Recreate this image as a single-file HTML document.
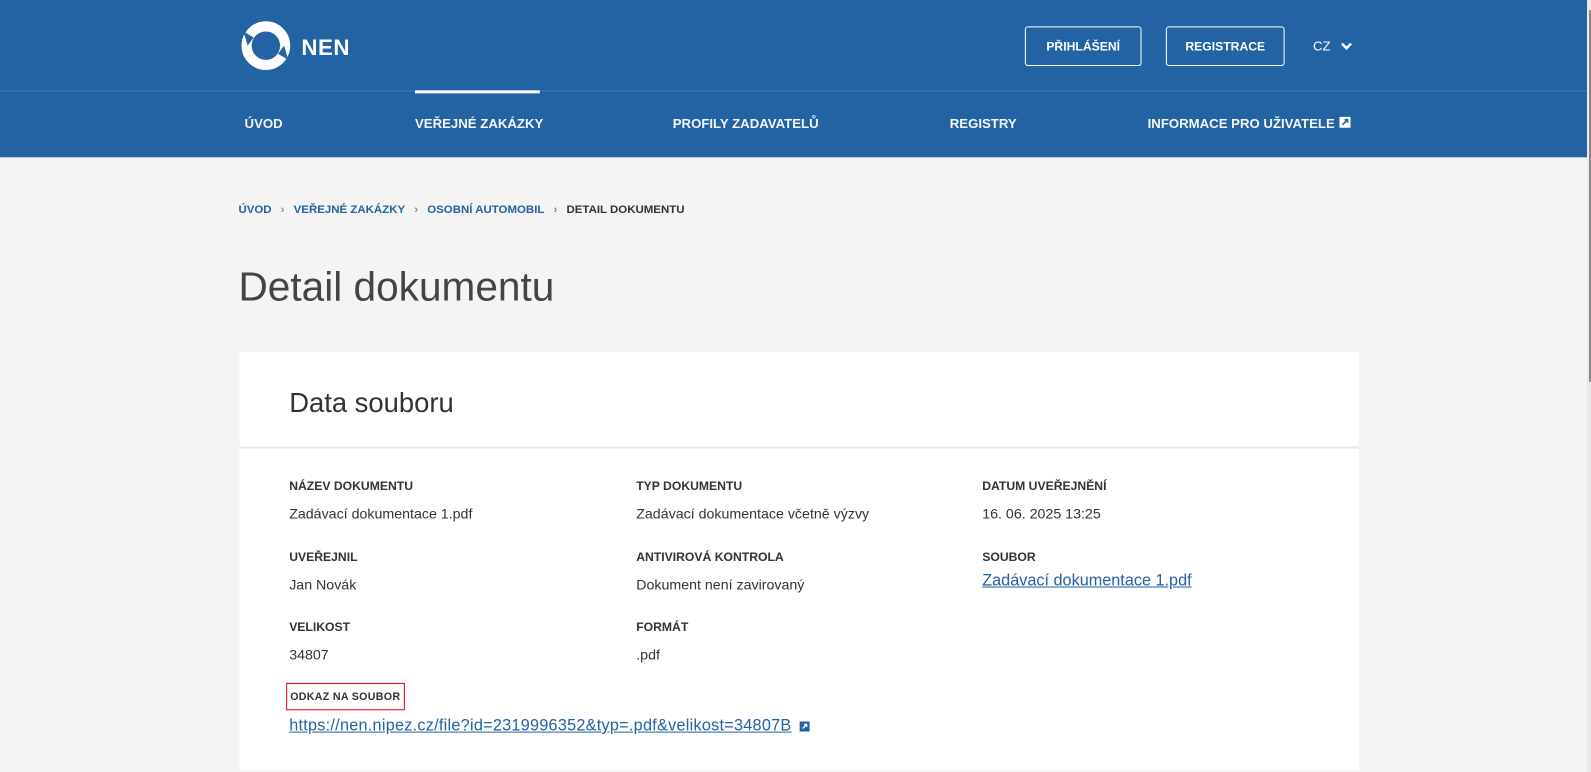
<!DOCTYPE html>
<html><head><meta charset="utf-8"><style>
*{margin:0;padding:0;box-sizing:border-box}
body{width:1591px;height:772px;overflow:hidden;background:#f4f4f4;font-family:"Liberation Sans",sans-serif;color:#333;position:relative}
#w{position:absolute;left:0;top:0;width:1568px;height:761px;transform:scale(1.0147);transform-origin:0 0}
.hdr{position:absolute;left:0;top:0;width:1566px;height:155px;background:#2362a3}
.line{position:absolute;left:0;top:89px;width:1566px;height:1px;background:#3d7bbd}
.nen{position:absolute;left:297px;top:34px;color:#fff;font-weight:bold;font-size:22px;letter-spacing:.5px}
.btn{position:absolute;top:26px;height:39px;border:1px solid #fff;border-radius:3px;color:#fff;font-weight:bold;font-size:12px;display:flex;align-items:center;justify-content:center}
.nav{position:absolute;top:114px;color:#fff;font-weight:bold;font-size:13px;opacity:.95}
.act{position:absolute;left:409px;top:89px;width:123px;height:3px;background:#fff}
.bc{position:absolute;top:201px;font-size:11.3px;font-weight:bold;left:235px;color:#2362a3;display:flex}
.bc .s{color:#888;margin:0 9px}
h1{position:absolute;left:235px;top:261px;font-size:40px;color:#444;font-family:"Liberation Sans",sans-serif;font-weight:normal}
.card{position:absolute;left:236px;top:347px;width:1103px;height:412px;background:#fff}
.card h2{position:absolute;left:49px;top:35px;font-weight:normal;font-size:27px;color:#333}
.sep{position:absolute;left:0;top:93px;width:1103px;height:2px;background:#e6e6e6}
.l{position:absolute;font-size:12px;font-weight:bold;color:#333}
.v{position:absolute;font-size:14px;color:#333}
a{color:#2362a3;text-decoration:underline}
.sb{position:absolute;left:1587px;top:0;width:4px;height:772px;background:#eaeaea}
.th{position:absolute;left:1589px;top:10px;width:2px;height:372px;background:#888}
</style></head><body>
<div id="w">
<div class="hdr"></div><div class="line"></div><div class="act"></div>
<svg style="position:absolute;left:236px;top:17px" width="52" height="56" viewBox="0 0 52 56"><circle cx="26" cy="28" r="19" fill="none" stroke="#fff" stroke-width="10"/><path d="M4 14 L14 20 L8 28Z" fill="#2362a3"/><path d="M48 42 L38 36 L44 28Z" fill="#2362a3"/></svg>
<div class="nen">NEN</div>
<div class="btn" style="left:1010px;width:115px">PŘIHLÁŠENÍ</div>
<div class="btn" style="left:1149px;width:117px">REGISTRACE</div>
<div style="position:absolute;left:1294px;top:38px;color:#fff;font-size:13px">CZ</div>
<svg style="position:absolute;left:1321px;top:41px" width="12" height="9" viewBox="0 0 12 9"><path d="M1.5 2 L6 6.5 L10.5 2" stroke="#fff" stroke-width="2.5" fill="none"/></svg>
<div class="nav" style="left:241px">ÚVOD</div>
<div class="nav" style="left:409px">VEŘEJNÉ ZAKÁZKY</div>
<div class="nav" style="left:663px">PROFILY ZADAVATELŮ</div>
<div class="nav" style="left:936px">REGISTRY</div>
<div class="nav" style="left:1131px">INFORMACE PRO UŽIVATELE</div>
<svg style="position:absolute;left:1320px;top:115px" width="11" height="11" viewBox="0 0 11 11"><rect width="11" height="11" fill="#fff"/><path d="M3 8 L8 3 M5 3 H8 V6" stroke="#2362a3" stroke-width="1.6" fill="none"/></svg>
<div class="bc"><span>ÚVOD</span><span class="s">›</span><span>VEŘEJNÉ ZAKÁZKY</span><span class="s">›</span><span>OSOBNÍ AUTOMOBIL</span><span class="s">›</span><span style="color:#333">DETAIL DOKUMENTU</span></div>
<h1>Detail dokumentu</h1>
<div class="card">
<h2>Data souboru</h2><div class="sep"></div>
<div class="l" style="left:49px;top:125px">NÁZEV DOKUMENTU</div><div class="v" style="left:49px;top:151px">Zadávací dokumentace 1.pdf</div>
<div class="l" style="left:391px;top:125px">TYP DOKUMENTU</div><div class="v" style="left:391px;top:151px">Zadávací dokumentace včetně výzvy</div>
<div class="l" style="left:732px;top:125px">DATUM UVEŘEJNĚNÍ</div><div class="v" style="left:732px;top:151px">16. 06. 2025 13:25</div>
<div class="l" style="left:49px;top:195px">UVEŘEJNIL</div><div class="v" style="left:49px;top:221px">Jan Novák</div>
<div class="l" style="left:391px;top:195px">ANTIVIROVÁ KONTROLA</div><div class="v" style="left:391px;top:221px">Dokument není zavirovaný</div>
<div class="l" style="left:732px;top:195px">SOUBOR</div><div class="v" style="left:732px;top:217px;font-size:16px"><a>Zadávací dokumentace 1.pdf</a></div>
<div class="l" style="left:49px;top:264px">VELIKOST</div><div class="v" style="left:49px;top:290px">34807</div>
<div class="l" style="left:391px;top:264px">FORMÁT</div><div class="v" style="left:391px;top:290px">.pdf</div>
<div class="l" style="left:46px;top:326px;border:1px solid #e3000f;padding:7px 3px 6px 3px;font-size:10.5px;letter-spacing:.3px">ODKAZ NA SOUBOR</div>
<div class="v" style="left:49px;top:360px;font-size:16px;white-space:nowrap;letter-spacing:.25px"><a>https://nen.nipez.cz/file?id=2319996352&amp;typ=.pdf&amp;velikost=34807B</a><svg style="margin-left:8px;vertical-align:-1px" width="10" height="10" viewBox="0 0 10 10"><rect width="10" height="10" fill="#2362a3"/><path d="M3 7 L7 3 M4.5 3 H7 V5.5" stroke="#fff" stroke-width="1.4" fill="none"/></svg></div>
</div>
</div>
<div class="sb"></div><div class="th"></div>
</body></html>
